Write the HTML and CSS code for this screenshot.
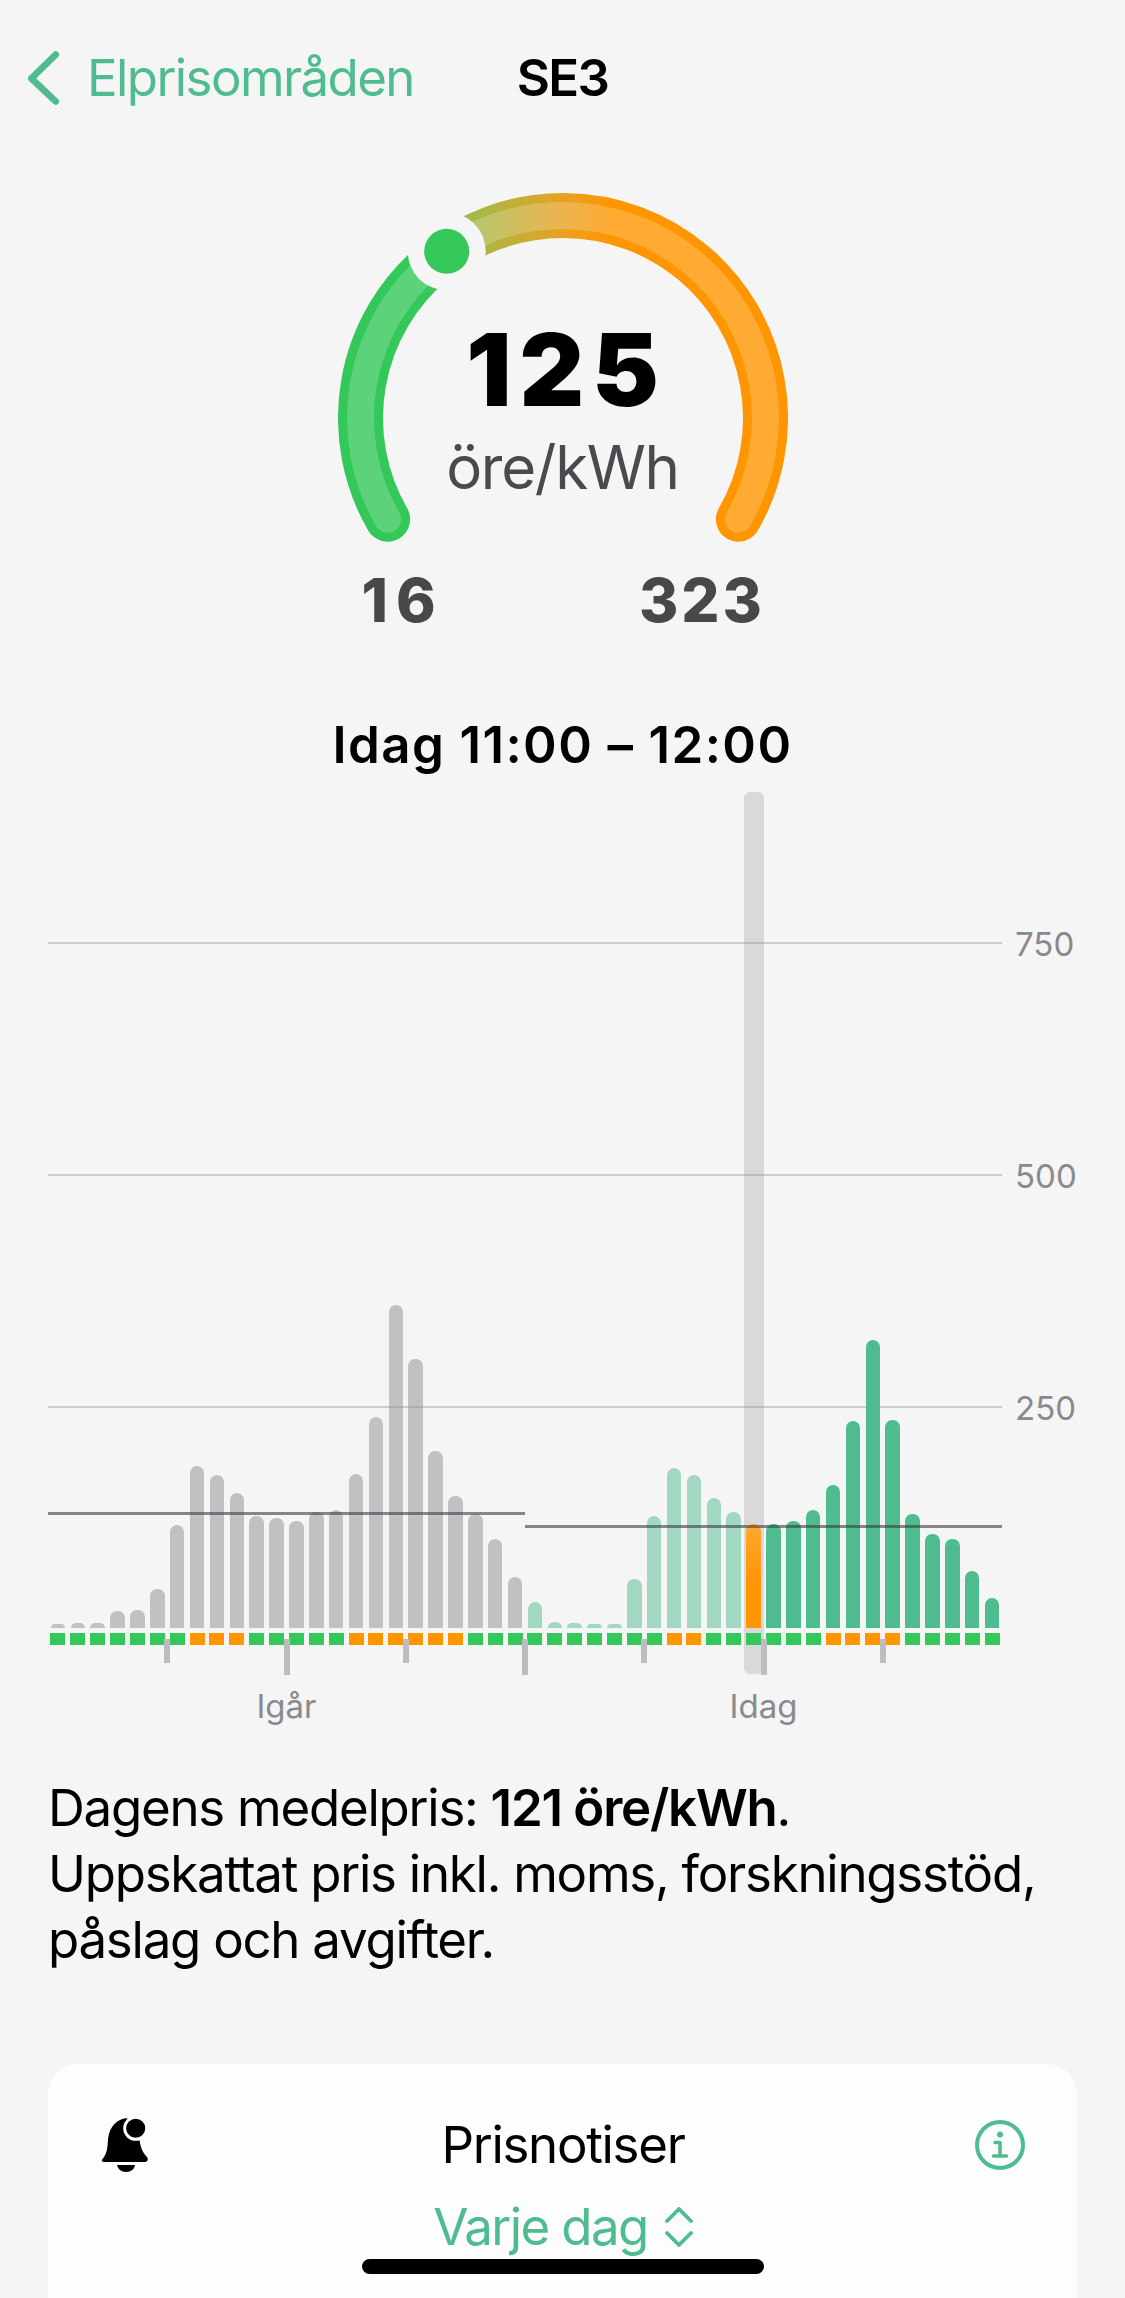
FILE: index.html
```html
<!DOCTYPE html>
<html lang="sv">

<head>
    <meta charset="UTF-8" />
    <meta name="viewport" content="width=device-width, initial-scale=1.0" />
    <title>Elpriser SE3</title>
    <link rel="stylesheet" href="styles.css">
</head>

<body>
    <header class="topbar">
        <a class="back">
            <svg class="back-icon" viewBox="0 0 40 64" aria-hidden="true">
                <path d="M33 6 6 32.500 33 58" />
            </svg>
            Elprisområden
        </a>
        <h1>SE3</h1>
    </header>

    <section class="gauge">
        <div class="gauge-dial">
            <svg class="gauge-arc" viewBox="0 0 450 350" aria-hidden="true">
                <defs>
                    <linearGradient id="arcColor" gradientUnits="userSpaceOnUse" x1="88" y1="0" x2="273" y2="0">
                        <stop offset="0" stop-color="#34c759" />
                        <stop offset="0.216" stop-color="#9fbb4a" />
                        <stop offset="0.77" stop-color="#eca020" />
                        <stop offset="1" stop-color="#ff9500" />
                    </linearGradient>
                </defs>
                <path class="arc" d="M49.630 326.250A202.500 202.500 0 1 1 400.370 326.250" />
                <path class="arc-light" d="M49.630 326.250A202.500 202.500 0 1 1 400.370 326.250" />
                <circle class="thumb-gap" cx="108.700" cy="58.300" r="39" />
                <circle class="thumb" cx="108.700" cy="58.300" r="22.500" />
            </svg>
            <div class="readout">
                <span class="price">125</span>
                <span class="unit">öre/kWh</span>
            </div>
        </div>
        <div class="range">
            <span class="range-min">16</span>
            <span class="range-max">323</span>
        </div>
    </section>

    <h2 class="selected-hour">Idag 11:00 – 12:00</h2>

    <section class="chart">
        <div class="highlight"></div>

        <div class="plot">
            <div class="gridline grid-750"><span>750</span></div>
            <div class="gridline grid-500"><span>500</span></div>
            <div class="gridline grid-250"><span>250</span></div>

            <div class="bars">
                <i class="bar past" style="height:4px"></i>
                <i class="bar past" style="height:5px"></i>
                <i class="bar past" style="height:5px"></i>
                <i class="bar past" style="height:17px"></i>
                <i class="bar past" style="height:18px"></i>
                <i class="bar past" style="height:39px"></i>
                <i class="bar past" style="height:103px"></i>
                <i class="bar past" style="height:162px"></i>
                <i class="bar past" style="height:153px"></i>
                <i class="bar past" style="height:135px"></i>
                <i class="bar past" style="height:112px"></i>
                <i class="bar past" style="height:110px"></i>
                <i class="bar past" style="height:107px"></i>
                <i class="bar past" style="height:116px"></i>
                <i class="bar past" style="height:118px"></i>
                <i class="bar past" style="height:154px"></i>
                <i class="bar past" style="height:211px"></i>
                <i class="bar past" style="height:323px"></i>
                <i class="bar past" style="height:269px"></i>
                <i class="bar past" style="height:177px"></i>
                <i class="bar past" style="height:132px"></i>
                <i class="bar past" style="height:114px"></i>
                <i class="bar past" style="height:89px"></i>
                <i class="bar past" style="height:51px"></i>

                <i class="bar earlier" style="height:26px"></i>
                <i class="bar earlier" style="height:6px"></i>
                <i class="bar earlier" style="height:5px"></i>
                <i class="bar earlier" style="height:4px"></i>
                <i class="bar earlier" style="height:4px"></i>
                <i class="bar earlier" style="height:49px"></i>
                <i class="bar earlier" style="height:112px"></i>
                <i class="bar earlier" style="height:160px"></i>
                <i class="bar earlier" style="height:153px"></i>
                <i class="bar earlier" style="height:130px"></i>
                <i class="bar earlier" style="height:116px"></i>
                <i class="bar current" style="height:104px"></i>
                <i class="bar coming" style="height:104px"></i>
                <i class="bar coming" style="height:107px"></i>
                <i class="bar coming" style="height:118px"></i>
                <i class="bar coming" style="height:143px"></i>
                <i class="bar coming" style="height:207px"></i>
                <i class="bar coming" style="height:288px"></i>
                <i class="bar coming" style="height:208px"></i>
                <i class="bar coming" style="height:114px"></i>
                <i class="bar coming" style="height:94px"></i>
                <i class="bar coming" style="height:89px"></i>
                <i class="bar coming" style="height:57px"></i>
                <i class="bar coming" style="height:30px"></i>
            </div>

            <div class="mean mean-yesterday"></div>
            <div class="mean mean-today"></div>
        </div>

        <div class="levels">
            <i></i><i></i><i></i><i></i><i></i><i></i><i></i>
            <i class="high"></i><i class="high"></i><i class="high"></i>
            <i></i><i></i><i></i><i></i><i></i>
            <i class="high"></i><i class="high"></i><i class="high"></i><i class="high"></i><i class="high"></i><i class="high"></i>
            <i></i><i></i><i></i>

            <i></i><i></i><i></i><i></i><i></i><i></i><i></i>
            <i class="high"></i><i class="high"></i>
            <i></i><i></i><i></i><i></i><i></i><i></i>
            <i class="high"></i><i class="high"></i><i class="high"></i><i class="high"></i>
            <i></i><i></i><i></i><i></i><i></i>
        </div>

        <div class="ticks">
            <div><i class="tick"></i></div>
            <div><i class="tick tick-long"></i></div>
            <div><i class="tick"></i></div>
            <div><i class="tick tick-long"></i></div>
            <div><i class="tick"></i></div>
            <div><i class="tick tick-long"></i></div>
            <div><i class="tick"></i></div>
            <div></div>
        </div>

        <div class="days">
            <span>Igår</span>
            <span>Idag</span>
        </div>
    </section>

    <p class="summary">
        Dagens medelpris: <b>121 öre/kWh</b>.<br>
        Uppskattat pris inkl. moms, forskningsstöd,<br>
        påslag och avgifter.
    </p>

    <section class="card">
        <div class="card-row">
            <svg class="bell" viewBox="0 0 47 54" aria-hidden="true">
                <path d="M1.500 41C5 37 6.500 32 6.800 24 7.200 12 13 3.500 21.500 1 24 .2 26 0 27 1 31 5 36 10 38 18 39 28 41 34 46 39 47.500 41 47 44 44 44H3.500C.5 44 .3 42.500 1.500 41Z" />
                <path d="M16 47H34C33.500 51 30 54 25 54S17 51 16 47Z" />
                <circle class="bell-gap" cx="34.700" cy="10.300" r="12.500" />
                <circle cx="34.700" cy="10.300" r="9.500" />
            </svg>
            <span class="card-title">Prisnotiser</span>
            <svg class="info" viewBox="0 0 50 50" aria-hidden="true">
                <circle cx="25" cy="25" r="23" />
                <circle class="info-dot" cx="25" cy="14.500" r="3" />
                <path d="M20 22.500H25V35.500M18.500 36H31.500" />
            </svg>
        </div>
        <div class="frequency">
            Varje dag
            <svg class="updown" viewBox="0 0 28 40" aria-hidden="true">
                <path d="M2 14 14 2 26 14M2 26 14 38 26 26" />
            </svg>
        </div>
    </section>

    <div class="home-indicator"></div>
</body>

</html>
```

FILE: styles.css
```css
* {
    padding: 0;
    margin: 0;
    box-sizing: border-box;
}

body {
    position: relative;
    height: 2298px;
    overflow: hidden;
    background-color: #f5f5f5;
    color: #000;
    font-family: Inter, "Liberation Sans", sans-serif;
    font-size: 51px;
    line-height: 66px;
    letter-spacing: -1.6px;
}

.topbar {
    display: grid;
    grid-template-columns: 1fr auto 1fr;
    align-items: center;
    height: 156px;
}

.back {
    display: flex;
    align-items: center;
    gap: 25px;
    padding-left: 26px;
    color: #4fbc8f;
    white-space: nowrap;
}

.back-icon {
    width: 36px;
    height: 60px;
    fill: none;
    stroke: #4fbc8f;
    stroke-width: 7.500;
    stroke-linecap: round;
    stroke-linejoin: round;
}

.topbar h1 {
    font-size: 51px;
    font-weight: 600;
}

/* gauge */
.gauge {
    display: flex;
    flex-direction: column;
    width: 450px;
    margin: 37px auto 0;
}

.gauge-dial {
    display: grid;
}

.gauge-arc,
.readout {
    grid-area: 1 / 1;
}

.gauge-arc {
    width: 450px;
    height: 350px;
}

.arc,
.arc-light {
    fill: none;
    stroke-linecap: round;
}

.arc {
    stroke: url(#arcColor);
    stroke-width: 45;
}

.arc-light {
    stroke: #fff;
    stroke-opacity: 0.2;
    stroke-width: 27;
}

.thumb-gap {
    fill: #f5f5f5;
}

.thumb {
    fill: #34c759;
}

.readout {
    display: flex;
    flex-direction: column;
    align-items: center;
    padding-top: 127px;
}

.price {
    padding-left: 8px;
    font-size: 100px;
    font-weight: 900;
    line-height: 100px;
    letter-spacing: 8px;
}

.unit {
    margin-top: 12px;
    color: #4a4a4e;
    font-size: 60px;
    line-height: 70px;
    letter-spacing: -1.300px;
}

.range {
    display: flex;
    justify-content: space-between;
    margin-top: 21px;
    color: #48484a;
    font-size: 60px;
    font-weight: 800;
    line-height: 72px;
    letter-spacing: 3px;
    text-align: center;
}

.range-min {
    width: 130px;
    letter-spacing: 8px;
}

.range-max {
    width: 171px;
}

.selected-hour {
    margin-top: 76px;
    font-size: 51px;
    font-weight: 600;
    letter-spacing: 1.400px;
    text-align: center;
}

/* price chart */
.chart {
    position: relative;
    width: 954px;
    margin: 14px 0 0 48px;
}

.highlight {
    position: absolute;
    top: 0;
    left: 696px;
    width: 20px;
    height: 882px;
    border-radius: 6px;
    background-color: rgba(142, 142, 147, 0.28);
}

.plot {
    position: relative;
    height: 836px;
}

.gridline {
    position: absolute;
    left: 0;
    width: 100%;
    height: 2px;
    background-color: rgba(142, 142, 147, 0.4);
}

.gridline span {
    position: absolute;
    top: -31px;
    left: 100%;
    margin-left: 13px;
    color: #8a8a8e;
    font-size: 33px;
    letter-spacing: 0;
}

.grid-750 {
    bottom: 684px;
}

.grid-500 {
    bottom: 452px;
}

.grid-250 {
    bottom: 220px;
}

.bars,
.levels {
    display: grid;
    grid-template-columns: repeat(48, 1fr);
    justify-items: center;
}

.bars {
    position: relative;
    height: 100%;
    align-items: end;
}

.bar {
    width: 14.500px;
    border-radius: 7px 7px 0 0;
}

.past {
    background-color: rgba(142, 142, 147, 0.5);
}

.earlier {
    background-color: rgba(79, 188, 143, 0.5);
}

.coming {
    background-color: #4fbc8f;
}

.current {
    width: 15px;
    background-image: linear-gradient(#ffa733, #ff9500 60%);
}

.mean {
    position: absolute;
    width: 50%;
    height: 3px;
    background-color: rgba(60, 60, 67, 0.6);
}

.mean-yesterday {
    left: 0;
    bottom: 113px;
}

.mean-today {
    left: 50%;
    bottom: 100px;
}

.levels {
    position: relative;
    margin-top: 5px;
}

.levels i {
    width: 15px;
    height: 12px;
    background-color: #34c759;
}

.levels .high {
    background-color: #ff9500;
}

.ticks {
    position: relative;
    display: grid;
    grid-template-columns: repeat(8, 1fr);
    height: 36px;
    margin-top: -6px;
}

.ticks div {
    display: flex;
    justify-content: flex-end;
}

.tick {
    width: 6px;
    height: 24px;
    margin-right: -3px;
    background-color: #bdbdbf;
}

.tick-long {
    height: 36px;
}

.days {
    display: grid;
    grid-template-columns: 1fr 1fr;
    margin-top: 13px;
    color: #8a8a8e;
    font-size: 33px;
    line-height: 36px;
    letter-spacing: 0;
    text-align: center;
}

.summary {
    margin: 51px 0 0 48px;
    letter-spacing: -1.250px;
    white-space: nowrap;
}

.summary b {
    font-weight: 600;
}

/* notification card */
.card {
    height: 300px;
    margin: 91px 48px 0;
    padding: 48px 52px 0 53px;
    border-radius: 30px;
    background-color: #fdfdfd;
}

.card-row {
    display: grid;
    grid-template-columns: 1fr auto 1fr;
    align-items: center;
}

.bell {
    width: 47px;
    height: 54px;
    fill: #000;
}

.bell-gap {
    fill: #fdfdfd;
}

.info {
    justify-self: end;
    width: 50px;
    height: 50px;
    fill: none;
    stroke: #4fbc8f;
    stroke-width: 4;
}

.info path {
    stroke-width: 3.500;
    stroke-linecap: round;
    stroke-linejoin: round;
}

.info-dot {
    fill: #4fbc8f;
    stroke: none;
}

.frequency {
    display: flex;
    justify-content: center;
    align-items: center;
    gap: 17px;
    margin-top: 16px;
    color: #4fbc8f;
}

.card-title {
    letter-spacing: -1.300px;
}

.updown {
    width: 28px;
    height: 40px;
    fill: none;
    stroke: #4fbc8f;
    stroke-width: 3.800;
    stroke-linecap: round;
    stroke-linejoin: round;
}

.home-indicator {
    position: absolute;
    left: 362px;
    bottom: 24px;
    width: 402px;
    height: 15px;
    border-radius: 8px;
    background-color: #000;
}
```
